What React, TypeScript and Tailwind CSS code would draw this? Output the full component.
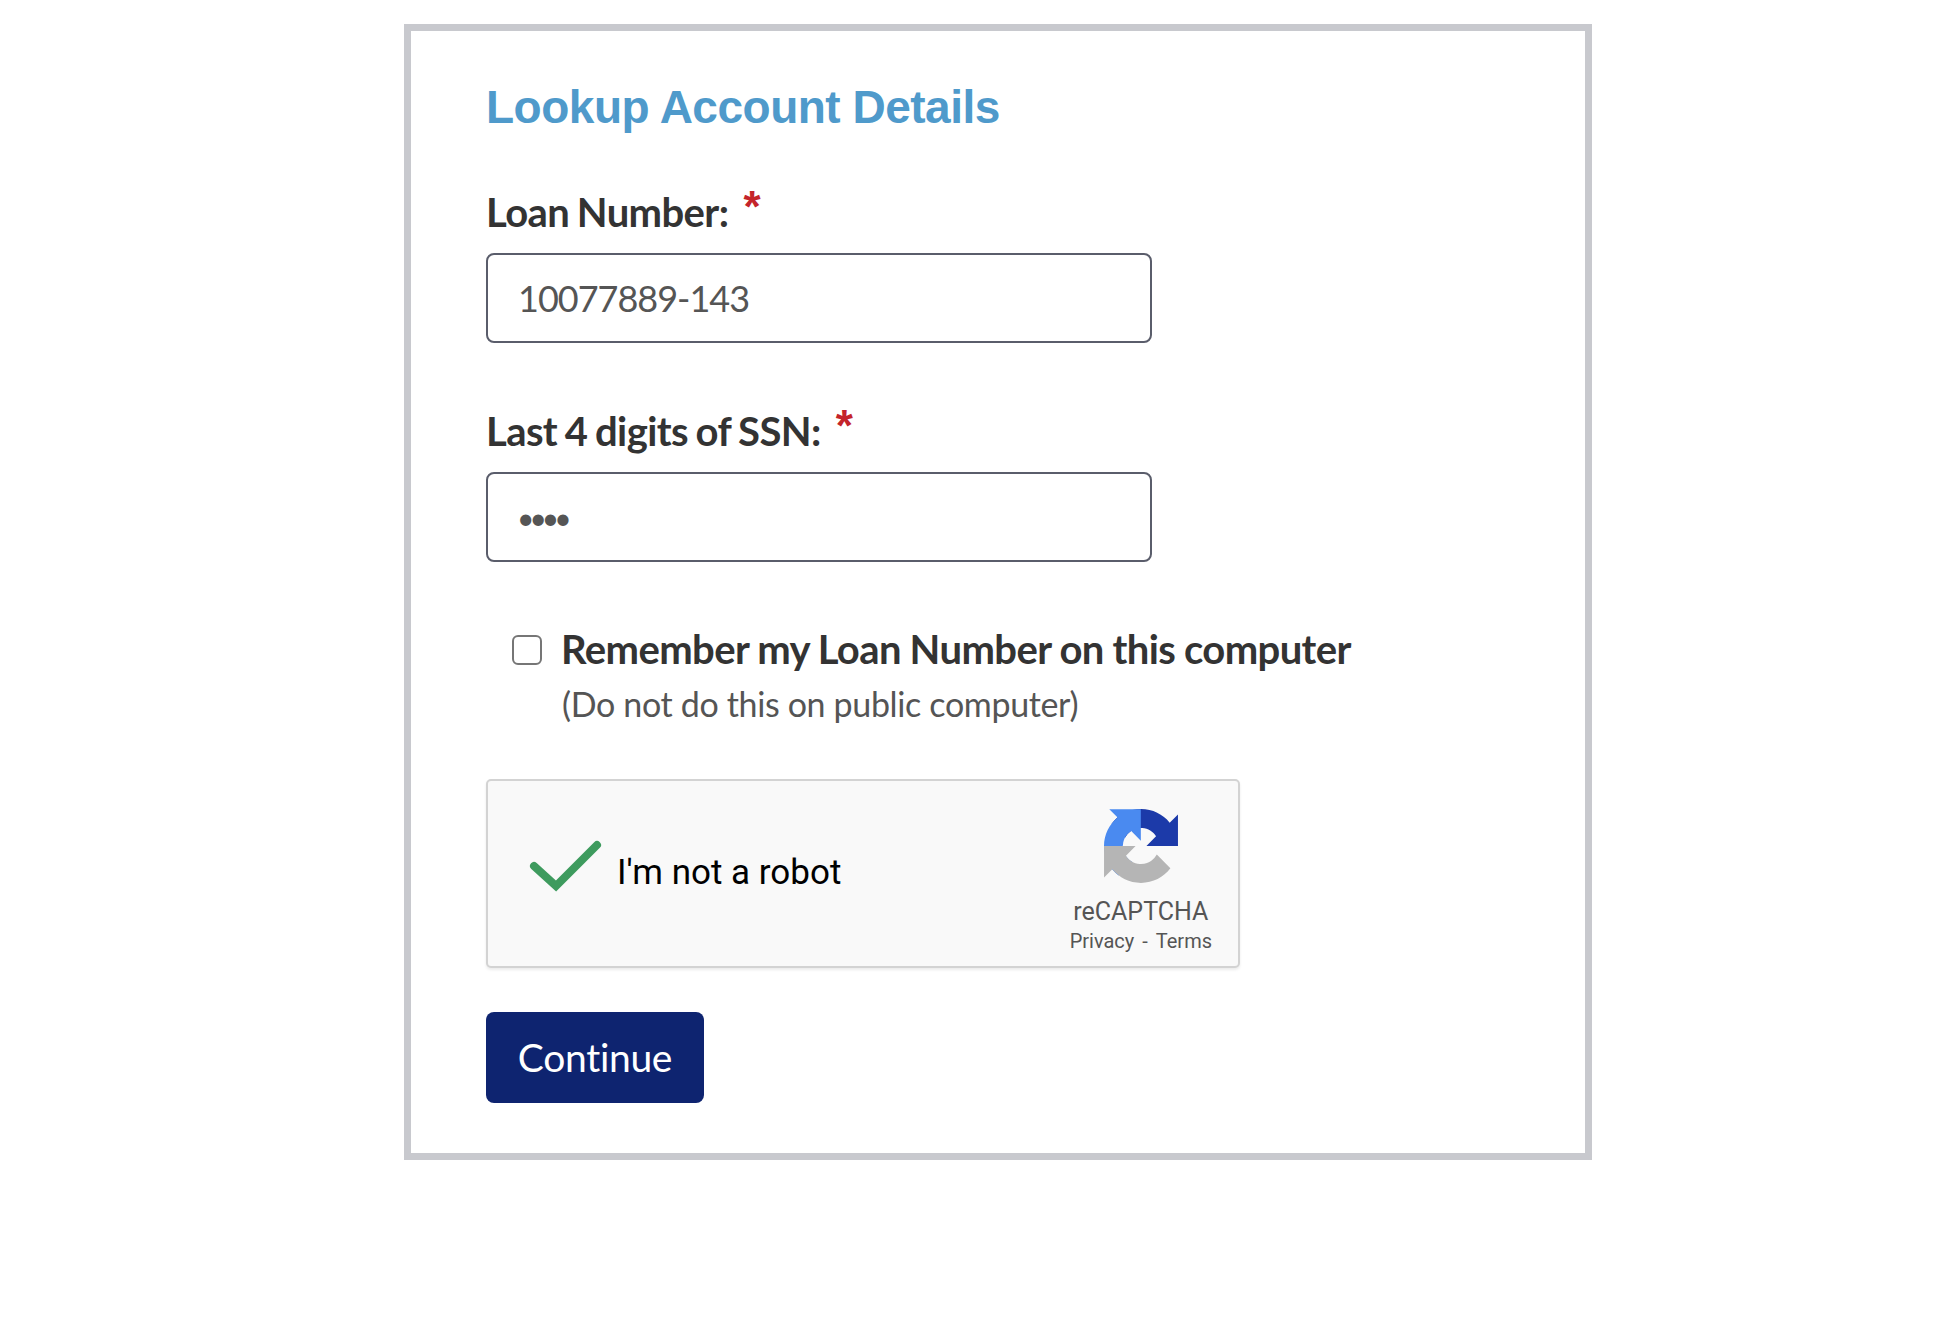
import { useState } from "react";

const bodyFont = "font-['Lato','Noto_Sans',sans-serif]";

function RecaptchaLogo() {
  return (
    <svg viewBox="0 0 64 64" className="h-[74px] w-[74px]">
      <path
        d="M64 31.955l-.033-1.37V4.687l-7.16 7.16C50.948 4.674 42.033.093 32.05.093c-10.4 0-19.622 4.96-25.458 12.64l11.736 11.86a15.55 15.55 0 0 1 4.754-5.334c2.05-1.6 4.952-2.906 8.968-2.906.485 0 .86.057 1.135.163 4.976.393 9.288 3.14 11.828 7.124l-8.307 8.307 26.3.001"
        fill="#1c3aa9"
      />
      <path
        d="M31.862.094l-1.37.033H4.594l7.16 7.16C4.58 13.147 0 22.06 0 32.044c0 10.4 4.96 19.622 12.64 25.458l11.86-11.736a15.55 15.55 0 0 1-5.334-4.754c-1.6-2.05-2.906-4.952-2.906-8.968 0-.485.057-.86.163-1.135.393-4.976 3.14-9.288 7.124-11.828l8.307 8.307V.088"
        fill="#4a8af0"
      />
      <path
        d="M.001 32.045l.033 1.37v25.898l7.16-7.16c5.86 7.173 14.775 11.754 24.76 11.754 10.4 0 19.622-4.96 25.458-12.64l-11.736-11.86a15.55 15.55 0 0 1-4.754 5.334c-2.05 1.6-4.952 2.906-8.968 2.906-.485 0-.86-.057-1.135-.163-4.976-.393-9.288-3.14-11.828-7.124l8.307-8.307-26.3-.001"
        fill="#b5b5b5"
      />
    </svg>
  );
}

function FieldLabel({ text }: { text: string }) {
  return (
    <label className={`${bodyFont} mb-[12px] flex h-[58px] items-start text-[40px] leading-[58px] font-bold tracking-[-0.6px] [word-spacing:-1.5px] text-[#333333]`}>
      {text}
      <span className="ml-[15px] mt-[-5px] font-['Liberation_Sans',sans-serif] text-[44px] leading-[58px] font-bold text-[#c4242a]">*</span>
    </label>
  );
}

export default function App() {
  const [remember, setRemember] = useState(false);

  return (
    <div className="min-h-[1336px] bg-white pt-[24px] pl-[404px]">
      <div className="h-[1136px] w-[1188px] border-[7px] border-[#c8c9ce] bg-white pt-[50px] pl-[75px]">
        <h1 className="font-['Liberation_Sans',sans-serif] text-[46px] leading-[52px] font-bold tracking-[-0.5px] text-[#4f9acb]">
          Lookup Account Details
        </h1>

        <div className="mt-[50px] flex flex-col gap-[59px]">
          <div className="flex flex-col">
            <FieldLabel text="Loan Number:" />
            <input
              type="text"
              defaultValue="10077889-143"
              readOnly
              className={`${bodyFont} h-[90px] w-[666px] rounded-lg border-2 border-[#5a5d6b] bg-white px-[30px] text-[36px] tracking-[-1px] text-[#555555] outline-none`}
            />
          </div>
          <div className="flex flex-col">
            <FieldLabel text="Last 4 digits of SSN:" />
            <input
              type="password"
              defaultValue="1234"
              readOnly
              className={`${bodyFont} h-[90px] w-[666px] rounded-lg border-2 border-[#5a5d6b] bg-white px-[29px] text-[30px] tracking-[-5px] text-[#555555] outline-none`}
            />
          </div>
        </div>

        <label className="mt-[55px] ml-[26px] flex items-start gap-[20px]">
          <input
            type="checkbox"
            checked={remember}
            onChange={(e) => setRemember(e.target.checked)}
            className="mt-[18px] h-[30px] w-[30px] shrink-0 appearance-none rounded-[6px] border-2 border-[#767676] bg-white"
          />
          <span className={`${bodyFont} flex flex-col`}>
            <span className="ml-[-1px] text-[40px] leading-[65px] font-bold tracking-[-0.6px] [word-spacing:-0.4px] text-[#333333]">
              Remember my Loan Number on this computer
            </span>
            <span className="text-[34px] leading-[44px] tracking-[-0.35px] text-[#555555]">(Do not do this on public computer)</span>
          </span>
        </label>

        <div className="mt-[53px] flex h-[189px] w-[754px] rounded-[5px] border-2 border-[#d3d3d3] bg-[#f9f9f9] shadow-[0_2px_3px_rgba(0,0,0,0.08)]">
          <div className="flex flex-1 items-center">
            <svg viewBox="0 0 74 54" className="mt-[-16px] ml-[41px] h-[54px] w-[74px]">
              <path d="M5 27 L27 47 L68 6" fill="none" stroke="#3e9b5e" strokeWidth="8" strokeLinecap="round" />
            </svg>
            <span className="ml-[14px] font-['Roboto',sans-serif] text-[35px] text-black">I'm not a robot</span>
          </div>
          <div className="mr-[26px] flex flex-col items-center pt-[28px] font-['Roboto',sans-serif] text-[#555555]">
            <RecaptchaLogo />
            <span className="mt-[13px] text-[25px] leading-[32px]">reCAPTCHA</span>
            <span className="mt-[1px] flex gap-[8px] text-[20px] leading-[25px]">
              <span>Privacy</span>
              <span>-</span>
              <span>Terms</span>
            </span>
          </div>
        </div>

        <button className={`${bodyFont} mt-[44px] flex h-[91px] w-[218px] items-center justify-center rounded-lg bg-[#0e2470] text-[39px] tracking-[-0.3px] text-white`}>
          Continue
        </button>
      </div>
    </div>
  );
}
